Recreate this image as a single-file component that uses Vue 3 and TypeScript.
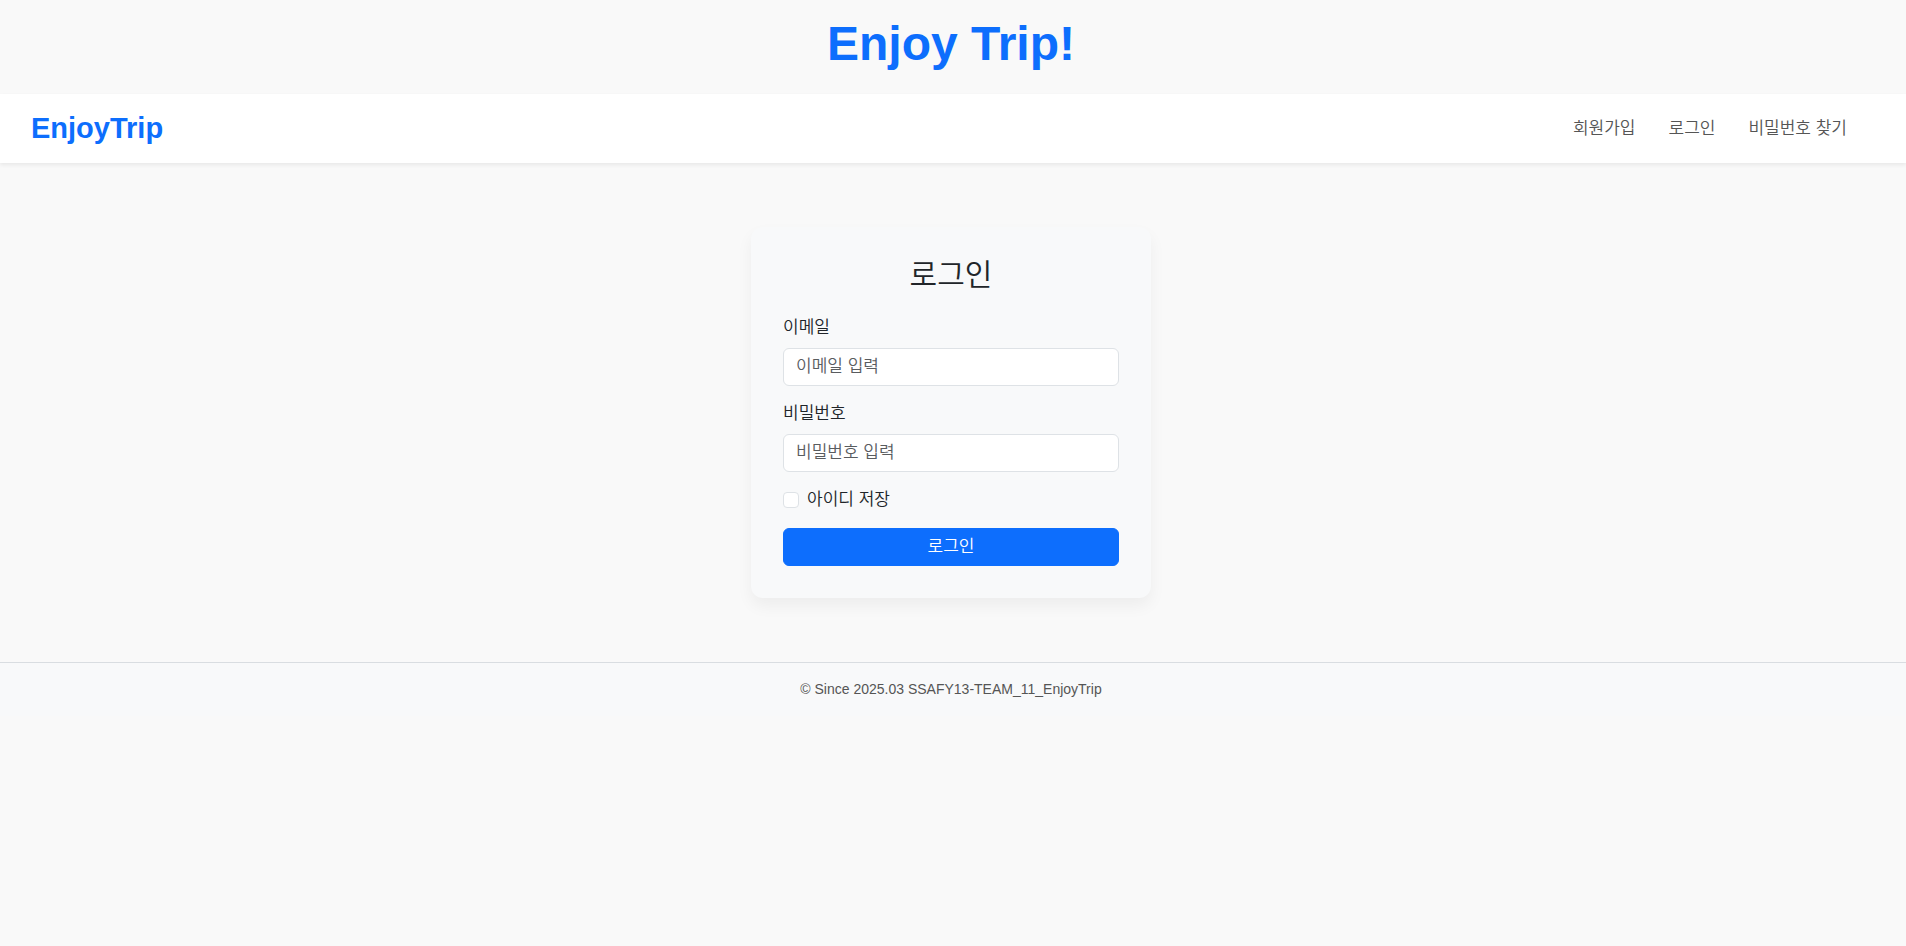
<script setup lang="ts">
import { ref } from 'vue'

interface NavItem {
  label: string
  href: string
}

const navItems: NavItem[] = [
  { label: '회원가입', href: '#signup' },
  { label: '로그인', href: '#login' },
  { label: '비밀번호 찾기', href: '#password' },
]

const email = ref('')
const password = ref('')
const rememberId = ref(false)
</script>

<template>
  <div class="page">
    <h1 class="page-title">Enjoy Trip!</h1>

    <nav class="navbar">
      <a class="brand" href="#home">EnjoyTrip</a>
      <ul class="nav-list">
        <li v-for="item in navItems" :key="item.href">
          <a class="nav-link" :href="item.href">{{ item.label }}</a>
        </li>
      </ul>
    </nav>

    <main class="content">
      <form class="card" @submit.prevent>
        <h2 class="card-title">로그인</h2>
        <div class="field">
          <label for="email">이메일</label>
          <input id="email" v-model="email" class="control" type="email" placeholder="이메일 입력" />
        </div>
        <div class="field">
          <label for="password">비밀번호</label>
          <input id="password" v-model="password" class="control" type="password" placeholder="비밀번호 입력" />
        </div>
        <div class="check">
          <input id="remember" v-model="rememberId" class="check-box" type="checkbox" />
          <label for="remember">아이디 저장</label>
        </div>
        <button class="submit" type="submit">로그인</button>
      </form>
    </main>

    <footer class="footer">© Since 2025.03 SSAFY13-TEAM_11_EnjoyTrip</footer>
  </div>
</template>

<style>
body {
  margin: 0;
  background: #f9f9f9;
}
</style>

<style scoped>
.page,
.page * {
  box-sizing: border-box;
}

.page {
  color: #212529;
  font-family: "Liberation Sans", Arial, "Noto Sans CJK KR", sans-serif;
  font-size: 17px;
  font-weight: 350;
  line-height: 24px;
}

.page-title {
  margin: 0;
  padding: 15px 4px 21px 0;
  color: #0d6efd;
  font-size: 48px;
  font-weight: 700;
  line-height: 58px;
  text-align: center;
}

.navbar {
  position: relative;
  display: flex;
  align-items: center;
  justify-content: space-between;
  padding: 12px 32px 12px 31px;
  background: #fff;
  box-shadow: 0 2px 4px rgba(0, 0, 0, 0.07);
}

.brand {
  color: #0d6efd;
  font-size: 29px;
  font-weight: 700;
  line-height: 45px;
  text-decoration: none;
}

.nav-list {
  display: flex;
  gap: 33px;
  margin: 0;
  padding: 0 27px 0 0;
  list-style: none;
}

.nav-link {
  color: #555;
  text-decoration: none;
}

.content {
  display: flex;
  justify-content: center;
  padding: 64px 20px 64px 16px;
}

.card {
  width: 100%;
  max-width: 400px;
  padding: 31px 32px 32px;
  border-radius: 12px;
  background: #f8f9fa;
  box-shadow: 0 8px 16px rgba(0, 0, 0, 0.05);
}

.card-title {
  margin: 0 0 24px;
  font-size: 30px;
  font-weight: 350;
  line-height: 34px;
  text-align: center;
}

.field {
  display: flex;
  flex-direction: column;
  gap: 8px;
  margin-bottom: 16px;
}

.control {
  width: 100%;
  height: 38px;
  padding: 6px 12px;
  border: 1px solid #dee2e6;
  border-radius: 6px;
  background: #fff;
  color: #212529;
  font: inherit;
  outline: none;
}

.control::placeholder {
  color: #595c5f;
  opacity: 1;
}

.control:focus {
  border-color: #86b7fe;
}

.check {
  display: flex;
  align-items: center;
  gap: 8px;
  margin-bottom: 16px;
}

.check-box {
  width: 16px;
  height: 16px;
  margin: 0;
  border: 1px solid #dee2e6;
  border-radius: 4px;
  background: #fff;
  appearance: none;
}

.check-box:checked {
  border-color: #0d6efd;
  background: #0d6efd;
}

.submit {
  display: block;
  width: 100%;
  padding: 6px 12px;
  border: 1px solid #0d6efd;
  border-radius: 6px;
  background: #0d6efd;
  color: #fff;
  font: inherit;
  cursor: pointer;
}

.footer {
  padding: 16px 20px 16px 16px;
  border-top: 1px solid #d9dde1;
  background: #f8f9fa;
  color: #555;
  font-size: 14px;
  line-height: 21px;
  text-align: center;
}
</style>
